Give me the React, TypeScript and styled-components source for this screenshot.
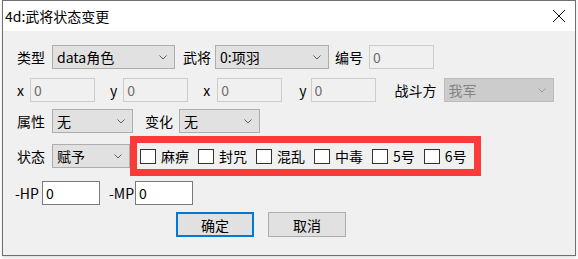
import styled, { createGlobalStyle } from "styled-components";

const GlobalStyle = createGlobalStyle`
    html, body {
        margin: 0;
        padding: 0;
        background: #ffffff;
    }
    body {
        font-family: "Noto Sans CJK SC", "Noto Sans", sans-serif;
        font-size: 14px;
        color: #000;
    }
`;

const Page = styled.div`
    width: 578px;
    height: 259px;
    padding-left: 2px;
    box-sizing: border-box;
`;

const Window = styled.div`
    width: 574px;
    height: 256px;
    box-sizing: border-box;
    border: 1px solid #6f6f6f;
    background: #f0f0f0;
    display: flex;
    flex-direction: column;
    box-shadow: 0 2px 3px rgba(0, 0, 0, 0.12);
`;

const TitleBar = styled.div`
    height: 30px;
    background: #ffffff;
    display: flex;
    align-items: center;
    justify-content: space-between;
    padding: 0 6px 0 2px;
    flex-shrink: 0;
`;

const Title = styled.span`
    font-size: 14px;
    line-height: 1;
`;

const CloseButton = styled.button`
    border: none;
    outline: none;
    background: inherit;
    width: 20px;
    height: 20px;
    padding: 0;
    display: flex;
    align-items: center;
    justify-content: center;
`;

const Body = styled.div`
    display: flex;
    flex-direction: column;
    padding: 14px 0 0 14px;
`;

const Row = styled.div<{ $h: number; $mt?: number }>`
    display: flex;
    align-items: center;
    height: ${(p) => p.$h}px;
    margin-top: ${(p) => p.$mt ?? 0}px;
`;

const Label = styled.span<{ $ml?: number; $gap?: number }>`
    margin-left: ${(p) => p.$ml ?? 0}px;
    margin-right: ${(p) => p.$gap ?? 7}px;
    font-size: 14px;
    line-height: 1;
    white-space: nowrap;
`;

const Select = styled.div<{ $w: number; $disabled?: boolean }>`
    width: ${(p) => p.$w}px;
    height: 24px;
    box-sizing: border-box;
    border: 1px solid ${(p) => (p.$disabled ? "#bcbcbc" : "#adadad")};
    background: ${(p) => (p.$disabled ? "#cccccc" : "#e1e1e1")};
    color: ${(p) => (p.$disabled ? "#838383" : "#000")};
    display: flex;
    align-items: center;
    justify-content: space-between;
    padding: 0 7px 0 4px;
    font-size: 14px;
    white-space: nowrap;
`;

const Input = styled.input<{ $w: number; $enabled?: boolean }>`
    width: ${(p) => p.$w}px;
    height: 24px;
    box-sizing: border-box;
    border: 1px solid ${(p) => (p.$enabled ? "#7a7a7a" : "#cccccc")};
    background: ${(p) => (p.$enabled ? "#ffffff" : "#f0f0f0")};
    color: ${(p) => (p.$enabled ? "#000" : "#6d6d6d")};
    font-family: "Noto Sans CJK SC", "Noto Sans", sans-serif;
    font-size: 14px;
    padding: 0 3px;
    margin: 0;
    outline: none;
`;

const Highlight = styled.div`
    height: 40px;
    box-sizing: border-box;
    border: 7px solid #fc3a3a;
    display: flex;
    align-items: center;
    gap: 9px;
    padding-left: 3px;
    width: 351px;
`;

const CheckItem = styled.label`
    display: flex;
    align-items: center;
    gap: 5px;
    font-size: 14px;
    line-height: 1;
`;

const Box = styled.span`
    width: 16px;
    height: 15px;
    box-sizing: border-box;
    border: 1px solid #333333;
    background: #ffffff;
`;

const Buttons = styled.div`
    display: flex;
    gap: 14px;
    margin-top: 7px;
    margin-left: 159px;
`;

const Button = styled.button<{ $primary?: boolean }>`
    width: 78px;
    height: 25px;
    box-sizing: border-box;
    border: ${(p) => (p.$primary ? "2px solid #0078d7" : "1px solid #adadad")};
    background: #e1e1e1;
    font-family: "Noto Sans CJK SC", sans-serif;
    font-size: 14px;
    color: #000;
    padding: 0;
    outline: none;
`;

function Chevron({ color = "#606060" }: { color?: string }) {
    return (
        <svg width="8" height="5" viewBox="0 0 8 5">
            <path d="M0.5 0.5 L4 4 L7.5 0.5" fill="none" stroke={color} strokeWidth="1" />
        </svg>
    );
}

function Dropdown({ w, value, disabled }: { w: number; value: string; disabled?: boolean }) {
    return (
        <Select $w={w} $disabled={disabled}>
            <span>{value}</span>
            <Chevron color={disabled ? "#9a9a9a" : "#606060"} />
        </Select>
    );
}

const statuses = ["麻痹", "封咒", "混乱", "中毒", "5号", "6号"];

export default function App() {
    return (
        <Page>
            <GlobalStyle />
            <Window>
                <TitleBar>
                    <Title>4d:武将状态变更</Title>
                    <CloseButton>
                        <svg width="14" height="14" viewBox="0 0 14 14">
                            <path d="M1 1 L13 13 M13 1 L1 13" stroke="#111" strokeWidth="1" />
                        </svg>
                    </CloseButton>
                </TitleBar>
                <Body>
                    <Row $h={24}>
                        <Label>类型</Label>
                        <Dropdown w={123} value="data角色" />
                        <Label $ml={8} $gap={4}>武将</Label>
                        <Dropdown w={114} value="0:项羽" />
                        <Label $ml={6} $gap={6}>编号</Label>
                        <Input $w={65} value="0" readOnly />
                    </Row>
                    <Row $h={24} $mt={9}>
                        <Label $gap={6}>x</Label>
                        <Input $w={65} value="0" readOnly />
                        <Label $ml={15} $gap={6}>y</Label>
                        <Input $w={65} value="0" readOnly />
                        <Label $ml={15} $gap={7}>x</Label>
                        <Input $w={65} value="0" readOnly />
                        <Label $ml={17} $gap={4}>y</Label>
                        <Input $w={65} value="0" readOnly />
                        <Label $ml={19} $gap={7}>战斗方</Label>
                        <Dropdown w={110} value="我军" disabled />
                    </Row>
                    <Row $h={24} $mt={7}>
                        <Label>属性</Label>
                        <Dropdown w={81} value="无" />
                        <Label $ml={12} $gap={6}>变化</Label>
                        <Dropdown w={81} value="无" />
                    </Row>
                    <Row $h={40} $mt={3}>
                        <Label>状态</Label>
                        <Dropdown w={78} value="赋予" />
                        <Highlight>
                            {statuses.map((s) => (
                                <CheckItem key={s}>
                                    <Box />
                                    {s}
                                </CheckItem>
                            ))}
                        </Highlight>
                    </Row>
                    <Row $h={24} $mt={5}>
                        <Label $ml={-2} $gap={3}>-HP</Label>
                        <Input $w={58} value="0" readOnly $enabled />
                        <Label $ml={9} $gap={1}>-MP</Label>
                        <Input $w={58} value="0" readOnly $enabled />
                    </Row>
                    <Buttons>
                        <Button $primary>确定</Button>
                        <Button>取消</Button>
                    </Buttons>
                </Body>
            </Window>
        </Page>
    );
}
